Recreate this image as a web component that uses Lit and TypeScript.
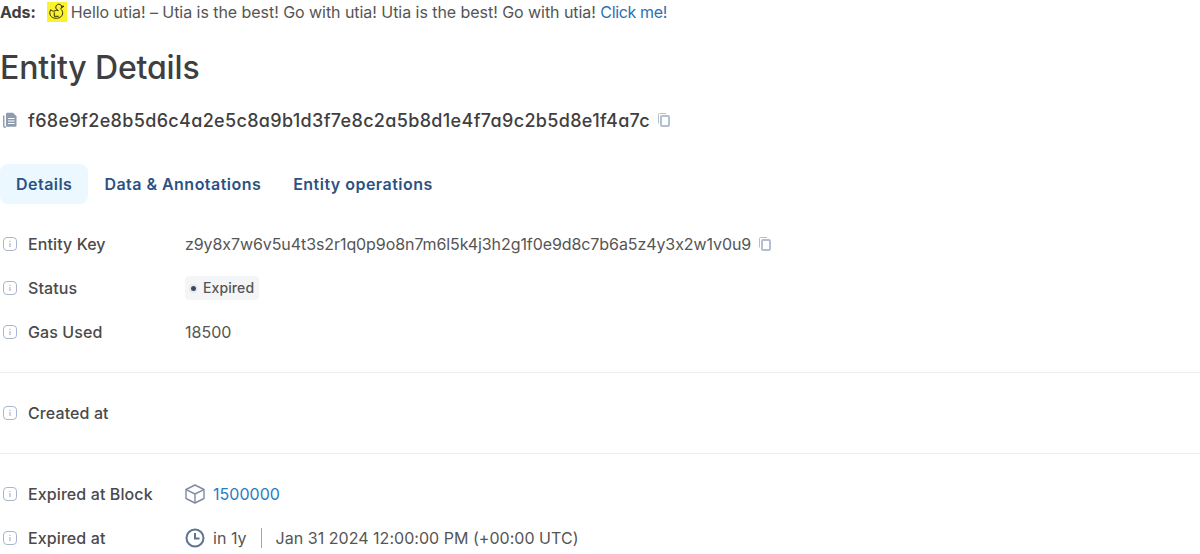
import { LitElement, css, html, svg } from 'lit';
import { customElement } from 'lit/decorators.js';

const infoIcon = svg`<svg class="info" viewBox="0 0 14 14" fill="none">
  <rect x="0.5" y="0.5" width="13" height="13" rx="3.5" stroke="#a9b6cb"/>
  <rect x="6.400" y="6" width="1.200" height="4" fill="#a9b6cb"/>
  <rect x="6.400" y="3.800" width="1.200" height="1.200" fill="#a9b6cb"/>
</svg>`;

const copyIcon = svg`<svg class="copy" viewBox="0 0 12 14" fill="none">
  <path d="M.5 10.500V1.500a1 1 0 0 1 1-1h6.500" stroke="#b3bfd1"/>
  <rect x="3" y="3" width="8" height="10" rx="1" stroke="#b3bfd1" stroke-width="2"/>
</svg>`;

const rows1 = ['Entity Key', 'Status', 'Gas Used'];

@customElement('app-root')
export class AppRoot extends LitElement {
  static styles = css`
    :host {
      display: block;
      height: 554px;
      overflow: hidden;
      background: #fff;
      color: #4a4a4a;
      font-family: Inter, 'Liberation Sans', sans-serif;
      font-size: 16px;
      font-feature-settings: 'calt' 0;
    }

    .ads {
      display: flex;
      align-items: center;
      height: 24px;
      white-space: pre;
      line-height: 24px;
      letter-spacing: -0.05px;
      color: #555;
    }

    .ads b {
      font-weight: 700;
      color: #404040;
      margin-right: 11px;
    }

    .ads a {
      color: #2f6fb5;
      margin-left: 4.500px;
      letter-spacing: -0.35px;
    }

    .duck {
      width: 20px;
      height: 20px;
      margin-right: 4px;
      background: #fbf22f;
    }

    h1 {
      margin: 24px 0 0;
      height: 40px;
      font-size: 32px;
      font-weight: 500;
      font-feature-settings: 'calt' 0, 'cv11' 1;
      letter-spacing: -0.15px;
      line-height: 40px;
      color: #3f3f3f;
    }

    .hash {
      display: flex;
      align-items: center;
      gap: 8px;
      height: 24px;
      margin-top: 20px;
      font-size: 18px;
      font-weight: 500;
      font-feature-settings: 'calt' 0, 'cv11' 1;
      letter-spacing: 0.335px;
      color: #3f3f3f;
    }

    .doc {
      width: 14px;
      height: 16px;
      margin: 0 3px;
    }

    .copy {
      width: 12px;
      height: 14px;
    }

    .tabs {
      display: flex;
      margin-top: 32px;
    }

    .tab {
      height: 40px;
      padding: 0 16px;
      border-radius: 8px;
      font-weight: 600;
      letter-spacing: 0.47px;
      line-height: 40px;
      color: #2c5282;
    }

    .tab.active {
      background: #ebf8ff;
    }

    .grid {
      margin-top: 18px;
    }

    .row {
      display: flex;
      align-items: center;
      height: 44px;
    }

    .label {
      display: flex;
      align-items: center;
      gap: 11px;
      width: 185px;
      flex: none;
      padding-left: 3px;
      box-sizing: border-box;
      font-weight: 500;
      letter-spacing: 0.1px;
    }

    .info {
      width: 14px;
      height: 14px;
    }

    .val {
      display: flex;
      align-items: center;
      gap: 8px;
      letter-spacing: 0.03px;
      color: #555;
    }

    .key {
      letter-spacing: -0.08px;
    }

    .badge {
      display: flex;
      align-items: center;
      gap: 7px;
      height: 24px;
      padding: 0 5px 0 6px;
      border-radius: 4px;
      background: #f4f5f7;
      font-size: 14px;
      font-weight: 500;
      letter-spacing: 0.1px;
      line-height: 24px;
    }

    .dot {
      width: 5px;
      height: 5px;
      border-radius: 50%;
      background: #3f4a5f;
      box-shadow: 0 0 0 2px #e6eaf2;
    }

    hr {
      margin: 18px 0 0;
      border: 0;
      border-top: 1px solid #e9ecf0;
    }

    .spaced {
      margin-top: 18px;
    }

    .link {
      color: #2b7bc5;
    }

    .sep {
      width: 1px;
      height: 20px;
      margin: 0 6px;
      background: #b794c8;
    }

    .ico {
      width: 20px;
      height: 20px;
    }
  `;

  label(text: string) {
    return html`<div class="label">${infoIcon}<span>${text}</span></div>`;
  }

  render() {
    return html`
      <div class="ads">
        <b>Ads:</b>
        <svg class="duck" viewBox="0 0 20 20" fill="none" stroke="#1a1a00" stroke-width="0.900">
          <g transform="translate(-1.200 .3)">
            <path d="M12.500 8.200c-1.800-.7-2.700-2-2.500-3.500.2-1.700 1.500-2.800 3-2.800 1.600 0 2.800 1.200 2.800 2.600 0 1-.4 1.700-.9 2.300 1 .8 2 2 2 3.700 0 3.400-2.800 5.500-6.400 5.500-3.800 0-6.500-2.100-6.500-5.300 0-1.200.3-2.400 1-3.400.5 1 1.400 1.500 2.600 1.500 1.100 0 2.100-.3 3-.9z"/>
            <path d="M15.700 3.800l2.400.2-2.100 1.400" />
            <path d="M8.500 10v4h4.500" />
          </g>
        </svg>
        <span>Hello utia! – Utia is the best! Go with utia! Utia is the best! Go with utia!</span>
        <a>Click me!</a>
      </div>
      <h1>Entity Details</h1>
      <div class="hash">
        <svg class="doc" viewBox="0 0 14 16" fill="none">
          <path d="M.8 3.500v10.500a1.200 1.200 0 0 0 1.200 1.200h1" stroke="#8592a8" stroke-width="1.300"/>
          <path d="M3 1.800a1 1 0 0 1 1-1h6l3.500 3.500v9.500a1 1 0 0 1-1 1H4a1 1 0 0 1-1-1z" fill="#8f9bb0"/>
          <path d="M5 6.500h6.500M5 9h6.500M5 11.500h6.500" stroke="#fff"/>
        </svg>
        <span>f68e9f2e8b5d6c4a2e5c8a9b1d3f7e8c2a5b8d1e4f7a9c2b5d8e1f4a7c</span>
        ${copyIcon}
      </div>
      <div class="tabs">
        <div class="tab active">Details</div>
        <div class="tab">Data &amp; Annotations</div>
        <div class="tab">Entity operations</div>
      </div>
      <div class="grid">
        <div class="row">
          ${this.label(rows1[0])}
          <div class="val"><span class="key">z9y8x7w6v5u4t3s2r1q0p9o8n7m6l5k4j3h2g1f0e9d8c7b6a5z4y3x2w1v0u9</span>${copyIcon}</div>
        </div>
        <div class="row">
          ${this.label(rows1[1])}
          <div class="val"><span class="badge"><i class="dot"></i>Expired</span></div>
        </div>
        <div class="row">
          ${this.label(rows1[2])}
          <div class="val">18500</div>
        </div>
      </div>
      <hr />
      <div class="row spaced">${this.label('Created at')}</div>
      <hr />
      <div class="row spaced">
        ${this.label('Expired at Block')}
        <div class="val">
          <svg class="ico" viewBox="0 0 20 20" fill="none" stroke="#7f8ca3" stroke-width="1.400" stroke-linejoin="round">
            <path d="M10 1l9 4.500v9L10 19l-9-4.500v-9z"/>
            <path d="M1.200 5.700L10 10l8.800-4.300M10 10v9"/>
          </svg>
          <span class="link">1500000</span>
        </div>
      </div>
      <div class="row">
        ${this.label('Expired at')}
        <div class="val">
          <svg class="ico" viewBox="0 0 20 20" fill="none" stroke="#5f7391" stroke-width="2">
            <circle cx="10" cy="10" r="8.500"/>
            <path d="M10 5v5.500h4.500"/>
          </svg>
          <span>in 1y</span>
          <i class="sep"></i>
          <span>Jan 31 2024 12:00:00 PM (+00:00 UTC)</span>
        </div>
      </div>
    `;
  }
}
